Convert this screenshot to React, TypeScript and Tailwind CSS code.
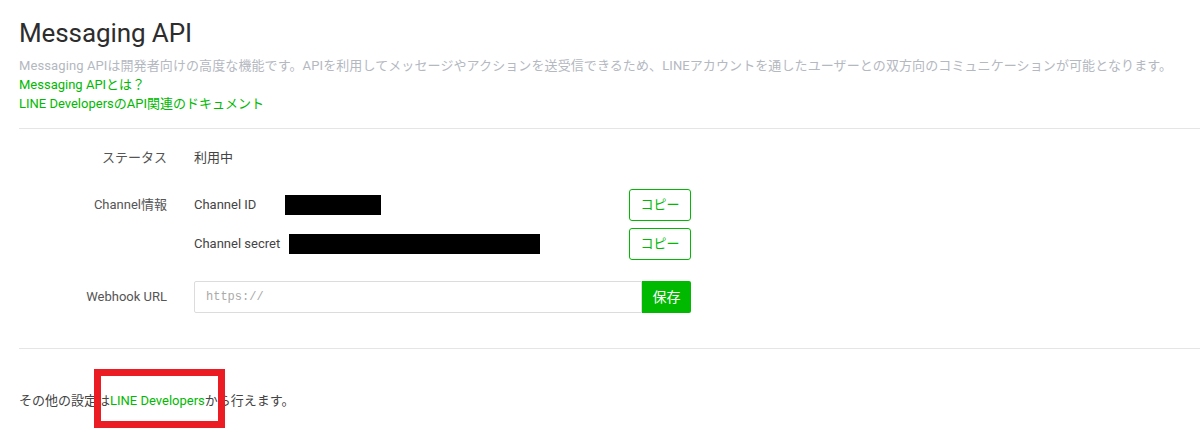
import React from 'react';

const font = { fontFamily: 'Roboto, "Noto Sans CJK JP", sans-serif' };

const CopyButton = () => (
  <button className="ml-auto h-[32px] w-[62px] rounded-[3px] border border-[#00b900] bg-white text-[13px] text-[#00b900]">
    コピー
  </button>
);

const FormRow = ({ label, children, className = '' }: { label: string; children: React.ReactNode; className?: string }) => (
  <div className={`flex ${className}`}>
    <div className="flex h-[32px] w-[148px] shrink-0 items-center justify-end text-[13px] text-[#555]">{label}</div>
    <div className="ml-[27px] w-[497px]">{children}</div>
  </div>
);

export default function App() {
  return (
    <div className="min-h-[447px] w-[1200px] bg-white pl-[19px] pt-[16px]" style={font}>
      {/* Header */}
      <h1 className="text-[26px] leading-[34px] font-normal tracking-[-0.1px] text-[#2d2d2d]">Messaging API</h1>
      <div className="mt-[6px] text-[13px] leading-[19px]">
        <p className="whitespace-nowrap tracking-[0.1px] text-[#b4b8bf]">
          Messaging APIは開発者向けの高度な機能です。APIを利用してメッセージやアクションを送受信できるため、LINEアカウントを通したユーザーとの双方向のコミュニケーションが可能となります。
        </p>
        <a className="block text-[#00b900]">Messaging APIとは？</a>
        <a className="block text-[#00b900]">LINE DevelopersのAPI関連のドキュメント</a>
      </div>

      <div className="mt-[15px] border-t border-[#e5e5e5]" />

      {/* Settings */}
      <div className="pt-[13px]">
        <FormRow label="ステータス">
          <div className="flex h-[32px] items-center text-[13px] text-[#444]">利用中</div>
        </FormRow>

        <FormRow label="Channel情報" className="mt-[15px]">
          <div className="flex flex-col gap-[7px]">
            <div className="flex h-[32px] items-center text-[13px] text-[#444]">
              <span>Channel ID</span>
              <span className="ml-[29px] h-[20px] w-[96px] bg-black" />
              <CopyButton />
            </div>
            <div className="flex h-[32px] items-center text-[13px] text-[#444]">
              <span>Channel secret</span>
              <span className="ml-[9px] h-[20px] w-[251px] bg-black" />
              <CopyButton />
            </div>
          </div>
        </FormRow>

        <FormRow label="Webhook URL" className="mt-[21px]">
          <div className="flex h-[32px]">
            <input
              className="h-full flex-1 rounded-l-[2px] border border-[#dcdcdc] px-[11px] text-[12px] outline-none placeholder:text-[#aaa]"
              style={{ fontFamily: '"Liberation Mono", "DejaVu Sans Mono", monospace' }}
              placeholder="https://"
            />
            <button className="h-full w-[49px] rounded-r-[2px] bg-[#00b900] text-[14px] text-white">保存</button>
          </div>
        </FormRow>
      </div>

      <div className="mt-[35px] border-t border-[#e5e5e5]" />

      {/* Footer note */}
      <div className="pt-[42px] text-[13px] leading-[19px] text-[#444]">
        <span className="relative">
          その他の設定は<a className="text-[#00b900]">LINE Developers</a>から行えます。
          <span className="pointer-events-none absolute left-[75px] top-[-24px] h-[59px] w-[131px] border-[7px] border-[#ec1c24]" />
        </span>
      </div>
    </div>
  );
}
